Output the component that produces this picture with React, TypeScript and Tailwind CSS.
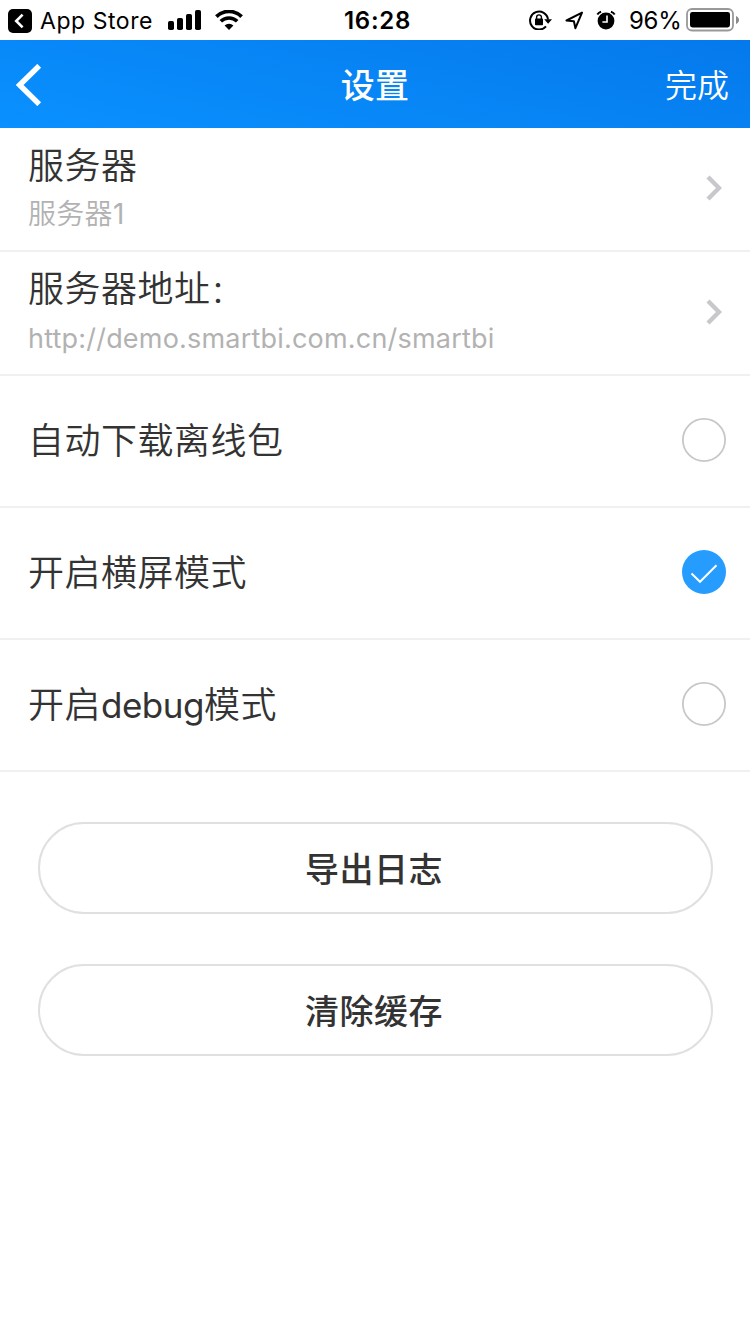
import React, { useState } from 'react';

interface LinkRowProps {
    title: React.ReactNode;
    detail: React.ReactNode;
}

interface ToggleRowProps {
    label: React.ReactNode;
    checked: boolean;
    onToggle: () => void;
}

const StatusBar: React.FC = () => (
    <div className="flex h-10 items-center bg-white pl-2 pr-[10px] text-[24px] font-normal leading-10 text-black">
        <svg className="mt-px h-6 w-6 shrink-0" viewBox="0 0 24 24" fill="none">
            <rect width="24" height="24" rx="5" fill="#000" />
            <path d="M14.6 5.6 8.2 12l6.4 6.4" stroke="#fff" strokeWidth="2.6" />
        </svg>
        <span className="ml-2 w-[128px] whitespace-nowrap pt-0.5 text-[23px] tracking-[0.55px]">App Store</span>

        {/* Signal */}
        <svg className="h-5 w-[33px] shrink-0" viewBox="0 0 33 20">
            <rect x="0" y="11" width="6" height="9" rx="1.8" />
            <rect x="9" y="8" width="6" height="12" rx="1.8" />
            <rect x="18" y="4" width="6" height="16" rx="1.8" />
            <rect x="27" y="0" width="6" height="20" rx="1.8" />
        </svg>

        {/* Wifi */}
        <svg className="ml-[14px] h-5 w-7 shrink-0" viewBox="0 0 28 20" fill="none" stroke="#000">
            <path d="M1.4 6.6a18 18 0 0 1 25.2 0" strokeWidth="3.8" />
            <path d="M5.8 11.3a11.8 11.8 0 0 1 16.4 0" strokeWidth="3.6" />
            <path d="M14 20 9.6 15.6a6.3 6.3 0 0 1 8.8 0z" fill="#000" stroke="none" />
        </svg>

        <span className="ml-[101px] w-[185px] whitespace-nowrap pt-0.5 font-semibold tracking-[0.7px]">16:28</span>

        {/* Rotation lock */}
        <svg className="h-5 w-[23px] shrink-0" viewBox="0 0 23 20" fill="none" stroke="#000">
            <path d="M17 16.3A9 9 0 1 1 19 9.5" strokeWidth="2" />
            <path d="M15.2 9.2H23l-3.9 4.5z" fill="#000" stroke="none" />
            <rect x="6" y="8.6" width="8" height="6.6" rx="0.8" fill="#000" stroke="none" />
            <path d="M7.6 9V7.3a2.4 2.4 0 0 1 4.8 0V9" strokeWidth="1.4" />
        </svg>

        {/* Location */}
        <svg className="ml-[13px] h-5 w-[19px] shrink-0" viewBox="0 0 19 20" fill="none">
            <path d="M17 2.600 1.500 10.500l7.400.7 1.500 7z" stroke="#000" strokeWidth="2" strokeLinejoin="round" />
        </svg>

        {/* Alarm */}
        <svg className="ml-3 h-5 w-5 shrink-0" viewBox="0 0 20 20" fill="none">
            <circle cx="10" cy="11" r="8.400" fill="#000" />
            <path d="M1.300 4.500a7 7 0 0 1 3.800-2.700M18.700 4.500a7 7 0 0 0-3.800-2.700" stroke="#000" strokeWidth="2" />
            <path d="M11 5.600v6.400H6.400" stroke="#fff" strokeWidth="1.600" />
        </svg>

        <span className="ml-[13px] w-[57px] whitespace-nowrap pt-0.5 tracking-[-0.3px]">96%</span>

        {/* Battery */}
        <svg className="h-6 w-[53px] shrink-0" viewBox="0 0 53 24">
            <rect x="1" y="1" width="46" height="21.500" rx="5" fill="none" stroke="#999" strokeWidth="1.800" />
            <rect x="4" y="4" width="40" height="15.500" rx="2.400" />
            <path d="M50 8c4 1.400 4 6.600 0 8z" fill="#8a8a8a" />
        </svg>
    </div>
);

const Header: React.FC = () => (
    <header className="grid h-[88px] grid-cols-[1fr_auto_1fr] items-center bg-[linear-gradient(13deg,#0a91ff_0%,#0579ec_100%)] text-white">
        <button className="ml-4 w-fit">
            <svg className="mt-px h-[42px] w-[26px]" viewBox="0 0 26 42" fill="none">
                <path d="M23.200 1.800 3.600 21l19.600 19.200" stroke="#fff" strokeWidth="5.400" />
            </svg>
        </button>
        <h1 className="pt-[3px] text-[34px] font-medium leading-[50px] tracking-[0.2px]">设置</h1>
        <button className="mr-[21px] justify-self-end pt-[3px] text-[32px] font-[350]">完成</button>
    </header>
);

const LinkRow: React.FC<LinkRowProps> = ({ title, detail }) => (
    <div className="flex h-[124px] items-center justify-between border-b-2 border-[#f0f0f0] pl-7 pr-7">
        <div className="flex flex-col">
            <span className="text-[36px] leading-[50px] tracking-[0.5px]">{title}</span>
            <span className="text-[28px] leading-[46px] tracking-[0.3px] text-[#b2b2b2]">{detail}</span>
        </div>
        <svg className="mb-0.5 h-[26px] w-4" viewBox="0 0 16 26" fill="none">
            <path d="M2 2l11 11L2 24" stroke="#c7c7cc" strokeWidth="4.400" />
        </svg>
    </div>
);

const ToggleRow: React.FC<ToggleRowProps> = ({ label, checked, onToggle }) => (
    <div className="flex h-[132px] items-center justify-between border-b-2 border-[#f0f0f0] pb-0.5 pl-7 pr-6">
        <span className="pt-0.5 text-[36px] leading-[50px] tracking-[0.5px]">{label}</span>
        <button role="checkbox" aria-checked={checked} onClick={onToggle}>
            <svg className="block h-11 w-11" viewBox="0 0 44 44" fill="none">
                {checked ? (
                    <>
                        <circle cx="22" cy="22" r="22" fill="#269cff" />
                        <path d="M9.500 23.500l8.500 8.300L34.500 15.200" stroke="#fff" strokeWidth="2" />
                    </>
                ) : (
                    <circle cx="22" cy="22" r="21.100" stroke="#c7c7cc" strokeWidth="1.800" />
                )}
            </svg>
        </button>
    </div>
);

export default function App() {
    const [offline, setOffline] = useState(false);
    const [landscape, setLandscape] = useState(true);
    const [debug, setDebug] = useState(false);

    return (
        <div className="min-h-[1334px] w-[750px] bg-white font-[Inter,'Noto_Sans_CJK_SC',sans-serif] font-[350] text-[#333]">
            <StatusBar />
            <Header />

            <LinkRow title="服务器" detail={<>服务器<span className="font-normal">1</span></>} />
            <LinkRow
                title={<>服务器地址<span className="text-[30px]">：</span></>}
                detail={
                    <span className="relative -top-px text-[27px] font-normal tracking-[0.2px]">
                        http://demo.smartbi.com.cn/smartbi
                    </span>
                }
            />
            <ToggleRow label="自动下载离线包" checked={offline} onToggle={() => setOffline(!offline)} />
            <ToggleRow label="开启横屏模式" checked={landscape} onToggle={() => setLandscape(!landscape)} />
            <ToggleRow
                label={<>开启<span className="text-[35px] font-normal tracking-[-0.5px]">debug</span>模式</>}
                checked={debug}
                onToggle={() => setDebug(!debug)}
            />

            <div className="flex flex-col gap-[50px] pl-[38px] pr-[37px] pt-[50px]">
                {['导出日志', '清除缓存'].map((text) => (
                    <button
                        key={text}
                        className="h-[92px] rounded-full border-2 border-[#e0e0e0] pr-[3px] pt-0.5 text-[34px] font-medium tracking-[0.5px]"
                    >
                        {text}
                    </button>
                ))}
            </div>
        </div>
    );
}
